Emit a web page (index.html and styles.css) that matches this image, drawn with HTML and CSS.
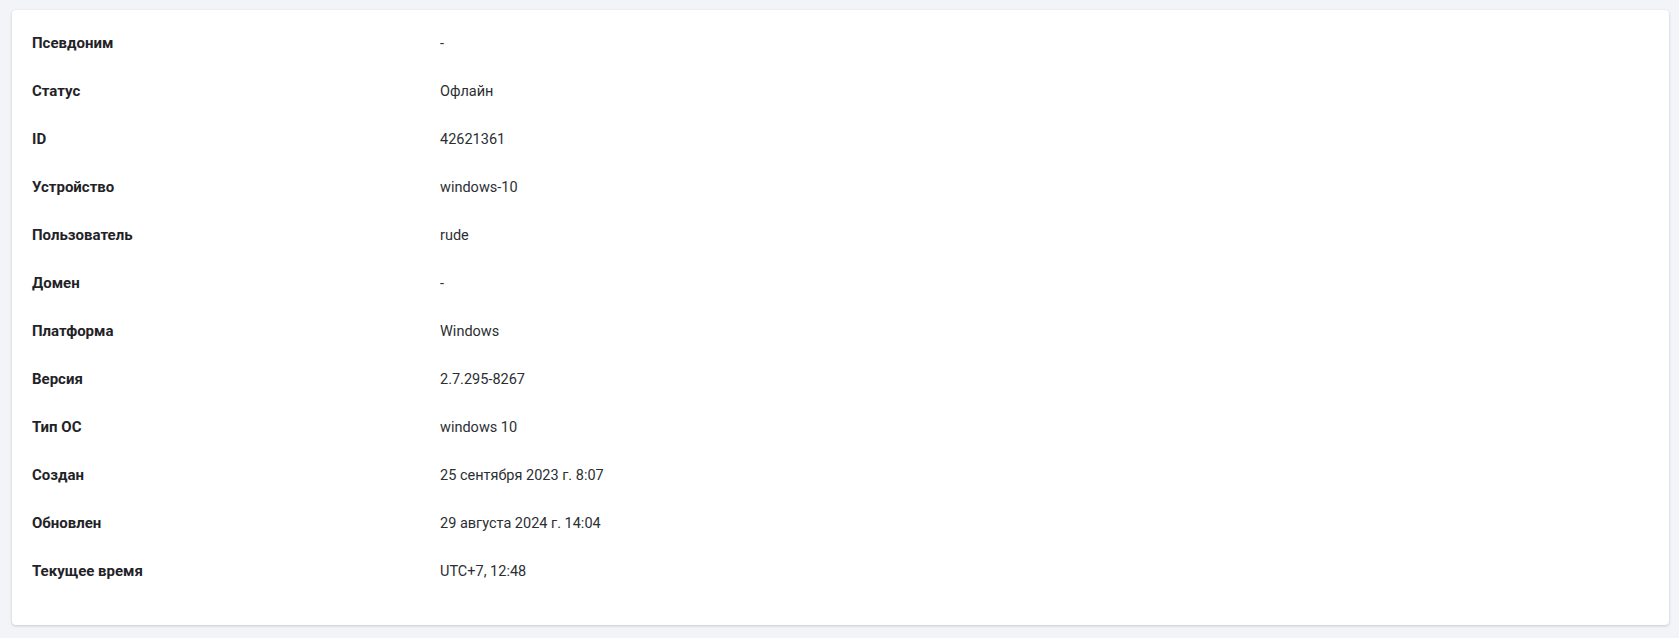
FILE: index.html
```html
<!DOCTYPE html>
<html lang="ru">
<head>
<meta charset="utf-8">
<title>Устройство</title>
<link rel="stylesheet" href="styles.css">
</head>
<body>
<div class="card">
  <div class="props">
    <div class="row"><div class="label">Псевдоним</div><div class="value">-</div></div>
    <div class="row"><div class="label">Статус</div><div class="value">Офлайн</div></div>
    <div class="row"><div class="label">ID</div><div class="value">42621361</div></div>
    <div class="row"><div class="label">Устройство</div><div class="value">windows-10</div></div>
    <div class="row"><div class="label">Пользователь</div><div class="value">rude</div></div>
    <div class="row"><div class="label">Домен</div><div class="value">-</div></div>
    <div class="row"><div class="label">Платформа</div><div class="value">Windows</div></div>
    <div class="row"><div class="label">Версия</div><div class="value">2.7.295-8267</div></div>
    <div class="row"><div class="label">Тип ОС</div><div class="value">windows 10</div></div>
    <div class="row"><div class="label">Создан</div><div class="value">25 сентября 2023 г. 8:07</div></div>
    <div class="row"><div class="label">Обновлен</div><div class="value">29 августа 2024 г. 14:04</div></div>
    <div class="row"><div class="label">Текущее время</div><div class="value">UTC+7, 12:48</div></div>
  </div>
</div>
</body>
</html>
```

FILE: styles.css
```css
html, body {
  margin: 0;
  padding: 0;
}
body {
  background: #f3f4f8;
  font-family: Roboto, "Noto Sans", "Liberation Sans", sans-serif;
  font-size: 15px;
  color: #212529;
  padding: 10px 10px 13px 12px;
  height: 638px;
  box-sizing: border-box;
}
.card {
  background: #ffffff;
  border-radius: 4px;
  box-shadow: 0 1px 3px rgba(0, 0, 0, 0.18), 0 0 1px rgba(0, 0, 0, 0.06);
  padding: 9px 20px 30px 20px;
  height: 615px;
  box-sizing: border-box;
}
.props {
  display: flex;
  flex-direction: column;
}
.row {
  display: grid;
  grid-template-columns: 408px 1fr;
  height: 48px;
  align-items: center;
}
.label {
  font-weight: 700;
  color: #1f2328;
}
.value {
  font-size: 14.5px;
  color: #2b2f33;
}
```
